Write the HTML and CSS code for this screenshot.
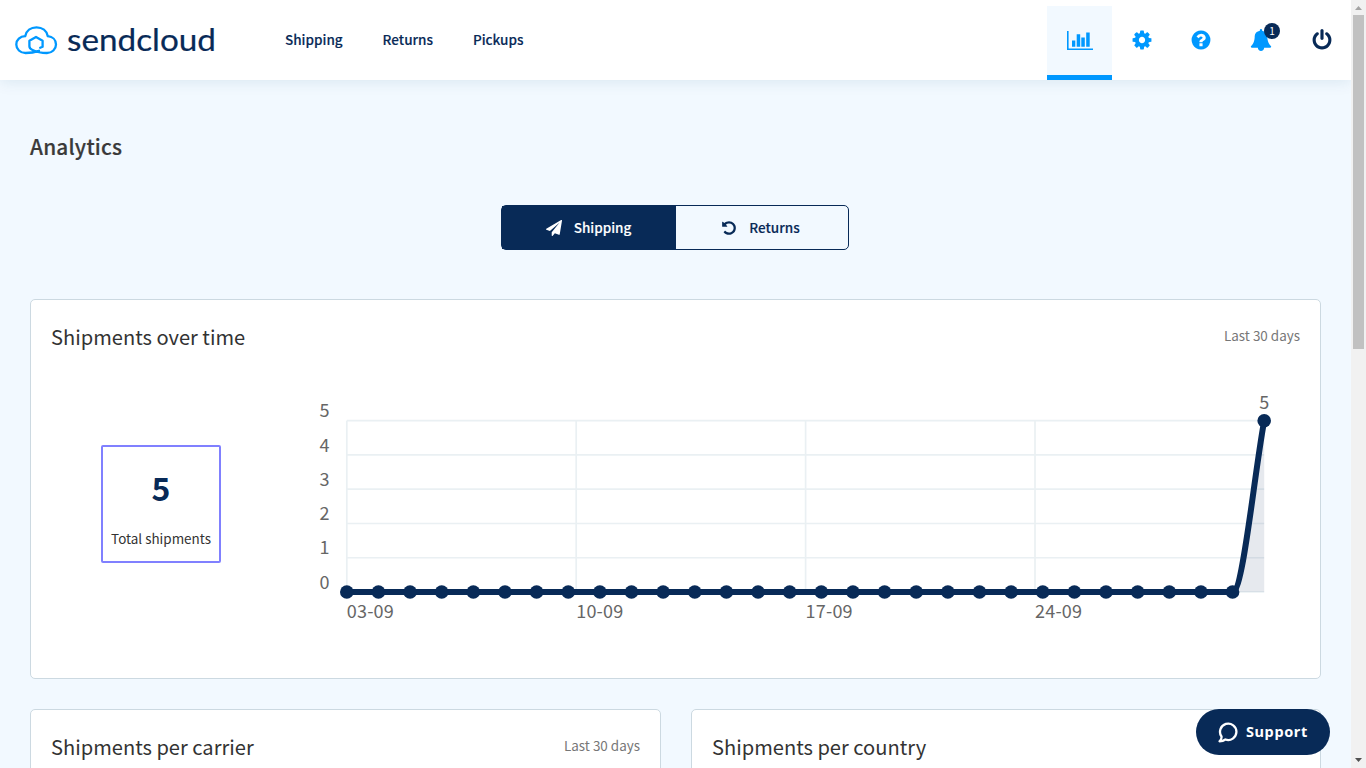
FILE: index.html
```html
<!DOCTYPE html>
<html lang="en">
<head>
<meta charset="utf-8">
<title>Analytics - Sendcloud</title>
<link rel="stylesheet" href="styles.css">
</head>
<body>
<div class="app">
  <div class="page">
    <header class="header">
      <svg class="logo" width="206" height="40" viewBox="0 0 206 40">
        <g fill="none" stroke="#0098ff" stroke-width="2.3" stroke-linejoin="round" stroke-linecap="round">
          <path d="M25.200 27.800L27.600 26.700V20.800L21 17L14.400 20.800V26.300C14.400 28.300 15.600 29.200 17.500 30C21.500 32 26 33 32 33C37 33 41 29.200 41 24.400C41 19.800 37.500 16.600 32.800 16.200C31.800 10.700 27.200 7.300 21.500 7.300C15.800 7.300 11.200 10.700 10.200 16.200C5.100 16.400 1.300 19.800 1.300 24.400C1.300 29.200 5.200 33 10.500 33C15 33 19.500 32.400 24 30.800"/>
        </g>
        <text class="logo-text" x="52" y="31" textLength="149" lengthAdjust="spacingAndGlyphs">sendcloud</text>
      </svg>
      <nav class="nav">
        <a>Shipping</a><a>Returns</a><a>Pickups</a>
      </nav>
      <div class="tools">
        <a class="tool tool-active">
          <svg width="26" height="20" viewBox="0 0 26 20" fill="#0098ff"><path d="M0 0h1.600v17.500H26V19H0zM5 9.500h3.300v6.300H5zM9.700 3.200h3.500v12.600H9.700zM14.300 6.500h3.500v9.300h-3.500zM19.200 1.500h3.500v14.300h-3.500z"/></svg>
        </a>
        <a class="tool tool-cog"><svg width="22" height="22" viewBox="0 0 1792 1792"><path d="M1152 896q0-106-75-181t-181-75-181 75-75 181 75 181 181 75 181-75 75-181zm512-109v222q0 12-8 23t-20 13l-185 28q-19 54-39 91 35 50 107 138 10 12 10 25t-9 23q-27 37-99 108t-94 71q-12 0-26-9l-138-108q-44 23-91 38-16 136-29 186-7 28-36 28h-222q-14 0-24.500-8.500t-11.500-21.500l-28-184q-49-16-90-37l-141 107q-10 9-25 9-14 0-25-11-126-114-165-168-7-10-7-23 0-12 8-23 15-21 51-66.500t54-70.500q-27-50-41-99l-183-27q-13-2-21-12.500t-8-23.500v-222q0-12 8-23t19-13l186-28q14-46 39-92-40-57-107-138-10-12-10-24 0-10 9-23 26-36 98.500-107.500t94.500-71.500q13 0 26 10l138 107q44-23 91-38 16-136 29-186 7-28 36-28h222q14 0 24.500 8.500t11.500 21.500l28 184q49 16 90 37l142-107q9-9 24-9 13 0 25 10 129 119 165 170 7 8 7 22 0 12-8 23-15 21-51 66.500t-54 70.500q26 50 41 98l183 28q13 2 21 12.500t8 23.500z"/></svg></a>
        <a class="tool tool-help"><svg width="22" height="22" viewBox="0 0 1792 1792"><path d="M1024 1376v-192q0-14-9-23t-23-9h-192q-14 0-23 9t-9 23v192q0 14 9 23t23 9h192q14 0 23-9t9-23zm256-672q0-88-55.500-163t-138.500-116-170-41q-243 0-371 213-15 24 8 42l132 100q7 6 19 6 16 0 25-12 53-68 86-92 34-24 86-24 48 0 85.500 26t37.500 59q0 38-20 61t-68 45q-63 28-115.500 86.500t-52.500 125.500v36q0 14 9 23t23 9h192q14 0 23-9t9-23q0-19 21.500-49.500t54.500-49.500q32-18 49-28.500t46-35 44.500-48 28-60.500 12.500-81zm384 192q0 209-103 385.500t-279.500 279.500-385.500 103-385.500-103-279.500-279.500-103-385.500 103-385.500 279.500-279.500 385.500-103 385.500 103 279.500 279.500 103 385.500z"/></svg></a>
        <a class="tool tool-bell"><svg width="22" height="22" viewBox="0 0 1792 1792"><path d="M1728 1408q0 52-38 90t-90 38h-448q0 106-75 181t-181 75-181-75-75-181h-448q-52 0-90-38t-38-90q50-42 91-88t85-119.500 74.500-158.500 50-206 19.500-260q0-152 117-282.500t307-158.500q-8-19-8-39 0-40 28-68t68-28 68 28 28 68q0 20-8 39 190 28 307 158.500t117 282.500q0 139 19.500 260t50 206 74.500 158.500 85 119.500 91 88z"/></svg><span class="badge">1</span></a>
        <a class="tool tool-power"><svg width="22" height="22" viewBox="0 0 1792 1792"><path d="M1664 896q0 156-61 298t-164 245-245 164-298 61-298-61-245-164-164-245-61-298q0-182 80.500-343t226.500-270q43-32 95.500-25t83.500 50q32 42 24.500 94.500t-49.500 84.500q-98 74-151.500 181t-53.500 228q0 104 40.500 198.500t109.500 163.500 163.500 109.500 198.500 40.500 198.500-40.500 163.500-109.500 109.500-163.500 40.500-198.500q0-121-53.500-228t-151.500-181q-42-32-49.500-84.500t24.500-94.500q31-43 84-50t95 25q146 109 226.500 270t80.500 343zm-640-768v640q0 52-38 90t-90 38-90-38-38-90v-640q0-52 38-90t90-38 90 38 38 90z"/></svg></a>
      </div>
    </header>

    <main class="main">
      <h1 class="title">Analytics</h1>
      <div class="tabs">
        <a class="tab tab-selected"><svg width="16" height="16" viewBox="0 0 1792 1792"><path d="M1764 11q33 24 27 64l-256 1536q-5 29-32 45-14 8-31 8-11 0-24-5l-453-185-242 295q-18 23-49 23-13 0-22-4-19-7-30.500-23.500t-11.500-36.500v-349l864-1059-1069 925-395-162q-37-14-40-55-2-40 32-59l1664-960q15-9 32-9 20 0 36 11z"/></svg><span>Shipping</span></a>
        <a class="tab"><svg width="16" height="16" viewBox="0 0 1792 1792"><path d="M1664 896q0 156-61 298t-164 245-245 164-298 61q-172 0-327-72.500t-264-204.500q-7-10-6.500-22.500t8.500-20.500l137-138q10-9 25-9 16 2 23 12 73 95 179 147t225 52q104 0 198.500-40.500t163.500-109.500 109.500-163.500 40.500-198.500-40.500-198.500-109.500-163.500-163.500-109.500-198.500-40.500q-98 0-188 35.500t-160 101.500l137 138q31 30 14 69-17 40-59 40h-448q-26 0-45-19t-19-45v-448q0-42 40-59 39-17 69 14l130 129q107-101 244.500-156.500t284.500-55.500q156 0 298 61t245 164 164 245 61 298z"/></svg><span>Returns</span></a>
      </div>

      <section class="card card-wide">
        <div class="card-head"><h2>Shipments over time</h2><span class="period">Last 30 days</span></div>
        <div class="card-body">
          <div class="stat"><strong>5</strong><span>Total shipments</span></div>
          <svg class="chart" id="chart" width="1000" height="250" viewBox="300 380 1000 250"></svg>
        </div>
      </section>

      <div class="row">
        <section class="card"><div class="card-head"><h2>Shipments per carrier</h2><span class="period">Last 30 days</span></div></section>
        <section class="card"><div class="card-head"><h2>Shipments per country</h2></div></section>
      </div>
    </main>
    <button class="support"><svg width="20" height="21" viewBox="0 0 20 21"><path d="M3.500 14.500A8.200 8.200 0 1 1 7.400 17.500Q5 19.300 1.500 19.300Q3.900 17.200 3.500 14.500Z" fill="none" stroke="#fff" stroke-width="2.300" stroke-linejoin="round"/></svg><span>Support</span></button>
  </div>
  <div class="scrollbar">
    <svg width="15" height="15" viewBox="0 0 15 15"><path d="M4 10h7L7.500 6z" fill="#a3a3a3"/></svg>
    <div class="thumb"></div>
    <svg width="15" height="15" viewBox="0 0 15 15"><path d="M4 5h7L7.500 9z" fill="#505050"/></svg>
  </div>
</div>
<script src="chart.js"></script>
</body>
</html>
```

FILE: styles.css
```css
* { box-sizing: border-box; }
body {
  margin: 0;
  font-family: "Noto Sans CJK SC", "Open Sans", sans-serif;
  font-size: 13.5px;
  color: #333;
  overflow: hidden;
}
.app { display: flex; width: 1366px; height: 768px; overflow: hidden; }
.page { position: relative; width: 1351px; height: 768px; overflow: hidden; background: #f2f9ff; }
.header {
  display: flex;
  height: 80px;
  padding-left: 15px;
  background: #fff;
  box-shadow: 0 2px 14px rgba(3, 80, 120, .1);
}
.logo { margin-top: 20px; flex: none; overflow: visible; }
.logo-text { font-family: Lato, sans-serif; font-size: 31px; fill: #082a57; stroke: #082a57; stroke-width: .2px; }
.nav { display: flex; gap: 40px; margin-left: 64px; line-height: 78px; font-weight: 500; color: #082a57; -webkit-text-stroke: .15px; }
.tools { display: flex; margin-left: auto; fill: #0098ff; }
.tool { display: flex; position: relative; width: 59px; align-items: center; justify-content: center; }
.tool-active { width: 65px; height: 74px; margin-top: 6px; background: #f2f9ff; border-bottom: 5px solid #0098ff; }
.tool-bell { width: 62px; }
.tool-power { width: 59px; fill: #082a57; }
.badge {
  position: absolute;
  left: 34px;
  top: 23px;
  width: 16px;
  height: 16px;
  border-radius: 50%;
  background: #082a57;
  color: #fff;
  font-size: 10px;
  line-height: 16px;
  text-align: center;
}
.main { padding: 0 30px; }
.title { margin: 0; padding-top: 49px; font-size: 20.800px; line-height: 34px; font-weight: 500; letter-spacing: .2px; color: #3a3a3a; -webkit-text-stroke: .2px; }
.tabs { display: flex; width: 348px; height: 45px; margin: 42px 0 0 471px; border: 1px solid #082a57; border-radius: 5px; font-weight: 500; color: #082a57; fill: #082a57; -webkit-text-stroke: .15px; }
.tab { display: flex; flex: 1; gap: 12px; align-items: center; justify-content: center; padding-right: 3px; }
.tab span { margin-top: -2px; }
.tab-selected { flex: none; width: 174px; padding-right: 1px; background: #082a57; color: #fff; fill: #fff; }
.card { background: #fff; border: 1px solid #ccd9e1; border-radius: 5px; padding: 20px; height: 380px; }
.card-wide { margin-top: 49px; }
.card-head { display: flex; justify-content: space-between; height: 60px; }
h2 { margin: 0; font-size: 20.100px; line-height: 33px; font-weight: 400; }
.period { line-height: 31px; font-size: 13.450px; color: #777; }
.card-body { display: flex; }
.stat {
  display: flex;
  flex-direction: column;
  align-items: center;
  width: 120px;
  height: 118px;
  margin: 65px 0 0 50px;
  border: 2px solid #8080ff;
  border-radius: 2px;
}
.stat strong { margin-top: 15px; font-size: 32px; line-height: 50px; font-weight: 700; color: #082a57; }
.stat span { margin-top: 14px; font-size: 13.450px; line-height: 24px; white-space: nowrap; }
.chart { flex: none; margin-left: 79px; }
.axis { font-size: 18px; fill: #666; }
.axis-date { letter-spacing: .2px; }
.grid { stroke: #eaf0f3; stroke-width: 1.700; fill: none; }
.row { display: grid; grid-template-columns: 631px 630px; gap: 30px; margin-top: 30px; }
.support {
  position: absolute;
  left: 1196px;
  top: 709px;
  display: flex;
  width: 134px;
  height: 46px;
  gap: 8px;
  align-items: center;
  padding: 0 0 0 22px;
  border: 0;
  border-radius: 23px;
  background: #082a57;
  color: #fff;
  font: 700 14.500px "Noto Sans", sans-serif;
  letter-spacing: .6px;
}
.support span { margin-top: -2px; }
.scrollbar { display: flex; flex-direction: column; justify-content: space-between; width: 15px; background: #f1f1f1; }
.thumb { width: 11px; height: 334px; margin: 0 2px auto; background: #c1c1c1; }
```

FILE: chart.js
```js
const left = 346.8, right = 1264.2, top0 = 420.7, bottom = 592;
const step = (right - left) / 29;
const parts = [];
for (let i = 0; i <= 5; i++) {
  const y = bottom - i * (bottom - top0) / 5;
  parts.push(`<path class="grid" d="M${left} ${y}H${right}"/>`);
  parts.push(`<text class="axis" x="329.500" y="${y - 3.3}" text-anchor="end">${i}</text>`);
}
['03-09', '10-09', '17-09', '24-09'].forEach((label, i) => {
  const x = left + i * 229.4;
  parts.push(`<path class="grid" d="M${x} ${top0}V${bottom}"/>`);
  parts.push(`<text class="axis axis-date" x="${x}" y="618">${label}</text>`);
});
const last = right - step;
const curve = `C${last + 10.5} ${bottom} ${right - 10.5} ${top0 + 57} ${right} ${top0}`;
parts.push(`<path d="M${last} ${bottom}${curve}V${bottom}Z" fill="#082a57" fill-opacity=".1"/>`);
parts.push(`<path d="M${left} ${bottom}H${last}${curve}" fill="none" stroke="#082a57" stroke-width="6"/>`);
for (let i = 0; i < 30; i++) {
  parts.push(`<circle cx="${left + i * step}" cy="${i === 29 ? top0 : bottom}" r="6.800" fill="#082a57"/>`);
}
parts.push(`<text class="axis" x="${right}" y="409" text-anchor="middle">5</text>`);
document.getElementById('chart').innerHTML = parts.join('');
```
